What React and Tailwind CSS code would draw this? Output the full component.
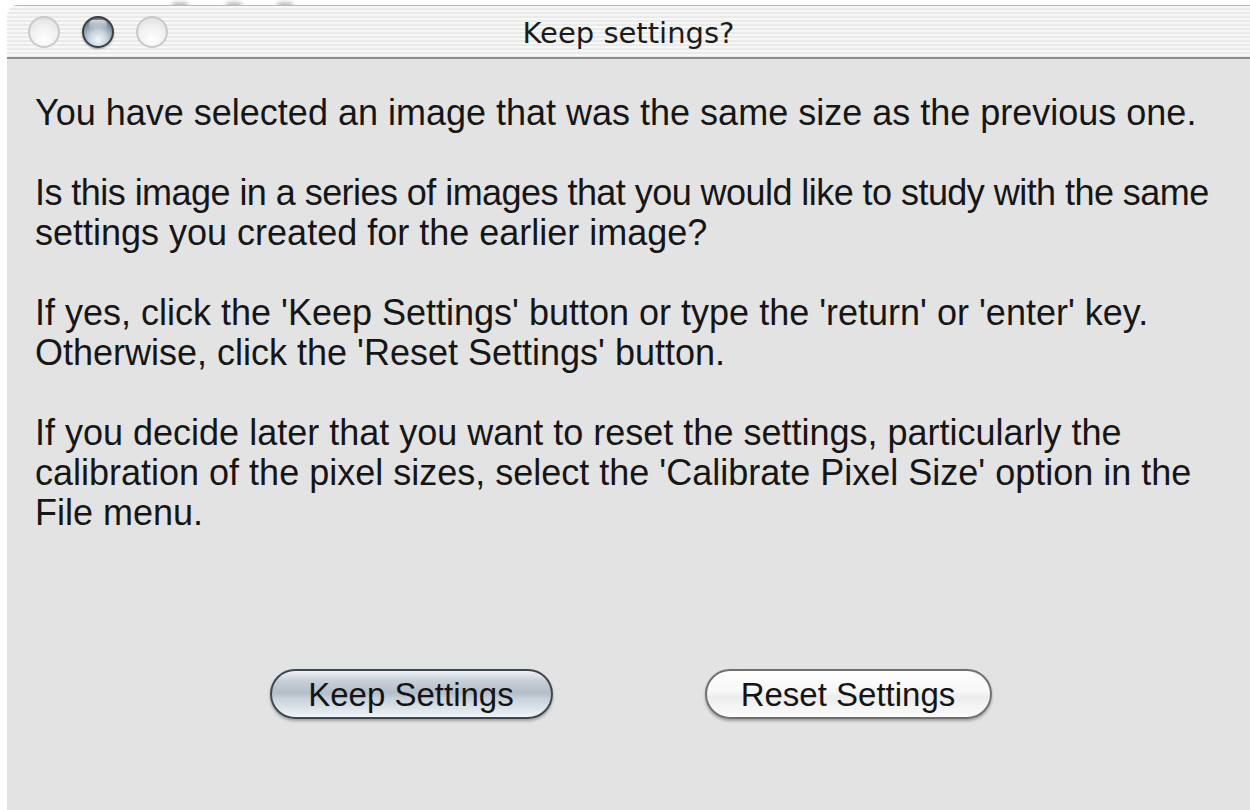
import React from "react";

const TrafficLight = ({ active = false }) => (
  <div
    className={`w-[32px] h-[32px] rounded-full ${
      active
        ? "border-2 border-[#3a3f46] bg-[radial-gradient(circle_at_50%_78%,#f2f7fb_0%,#c6d2de_35%,#7d8b9a_70%,#55606c_100%)] shadow-[0_1px_2px_rgba(0,0,0,0.35)]"
        : "border-2 border-[#c9c9c9] bg-[radial-gradient(circle_at_50%_75%,#ffffff_0%,#f1f1f1_50%,#dcdcdc_100%)]"
    }`}
  >
    {active && (
      <div className="mx-auto mt-[2px] w-[18px] h-[9px] rounded-full bg-gradient-to-b from-white/70 to-white/0" />
    )}
  </div>
);

const AquaButton = ({ children, primary = false }) => (
  <button
    className={`h-[50px] rounded-full text-[33px] leading-none text-[#141414] shadow-[0_2px_3px_rgba(0,0,0,0.3)] ${
      primary
        ? "w-[283px] border-2 border-[#3e4650] bg-[linear-gradient(to_bottom,#f1f4f7_0%,#c9d1da_20%,#b3bec9_48%,#c8d1da_60%,#e4ebf1_90%,#f2f6f9_100%)]"
        : "w-[287px] border-2 border-[#707070] bg-[linear-gradient(to_bottom,#ffffff_0%,#f7f7f7_45%,#ececec_55%,#f8f8f8_90%,#ffffff_100%)]"
    }`}
    style={{ fontFamily: '"Liberation Sans", Arial, sans-serif' }}
  >
    {children}
  </button>
);

export default function App() {
  return (
    <div
      className="relative w-[1250px] h-[810px] bg-white pl-[7px] pt-[5px] overflow-hidden"
      style={{ fontFamily: '"Liberation Sans", Arial, sans-serif' }}
    >
      {/* faint smudges left on the top edge */}
      <div className="absolute left-[172px] top-[3px] w-[16px] h-[4px] rounded-full bg-[#666] blur-[2px] opacity-60" />
      <div className="absolute left-[226px] top-[3px] w-[16px] h-[4px] rounded-full bg-[#666] blur-[2px] opacity-60" />
      <div className="absolute left-[277px] top-[3px] w-[16px] h-[4px] rounded-full bg-[#666] blur-[2px] opacity-60" />

      <div className="flex flex-col h-full rounded-tl-[10px] overflow-hidden">
        {/* title bar */}
        <div className="relative h-[54px] shrink-0 border-t border-[#b8b8b8] border-b-2 border-b-[#8c8c8c] bg-[repeating-linear-gradient(to_bottom,#f8f8f8_0px,#f8f8f8_2px,#eaeaea_2px,#eaeaea_4px)] flex items-center pl-[21px] gap-[22px]">
          <TrafficLight />
          <TrafficLight active />
          <TrafficLight />
          <div
            className="absolute inset-x-0 top-[11px] text-center text-[29px] leading-[32px] text-[#1c1c1c]"
            style={{ fontFamily: '"DejaVu Sans", Verdana, sans-serif' }}
          >
            Keep settings?
          </div>
        </div>

        {/* dialog body */}
        <div className="flex-1 bg-[#e3e3e3] pl-[28px] pt-[34px] text-[36px] leading-[40px] text-[#161616]">
          <p className="whitespace-nowrap">
            You have selected an image that was the same size as the previous one.
          </p>
          <p className="mt-[40px] whitespace-nowrap">
            <span className="tracking-[-0.55px]">
              Is this image in a series of images that you would like to study with the same
            </span>
            <br />
            settings you created for the earlier image?
          </p>
          <p className="mt-[40px] whitespace-nowrap">
            If yes, click the 'Keep Settings' button or type the 'return' or 'enter' key.
            <br />
            Otherwise, click the 'Reset Settings' button.
          </p>
          <p className="mt-[40px] whitespace-nowrap">
            If you decide later that you want to reset the settings, particularly the
            <br />
            calibration of the pixel sizes, select the 'Calibrate Pixel Size' option in the
            <br />
            File menu.
          </p>

          <div className="mt-[136px] -ml-[28px] flex justify-center gap-[152px] pl-[4px]">
            <AquaButton primary>Keep Settings</AquaButton>
            <AquaButton>Reset Settings</AquaButton>
          </div>
        </div>
      </div>
    </div>
  );
}
